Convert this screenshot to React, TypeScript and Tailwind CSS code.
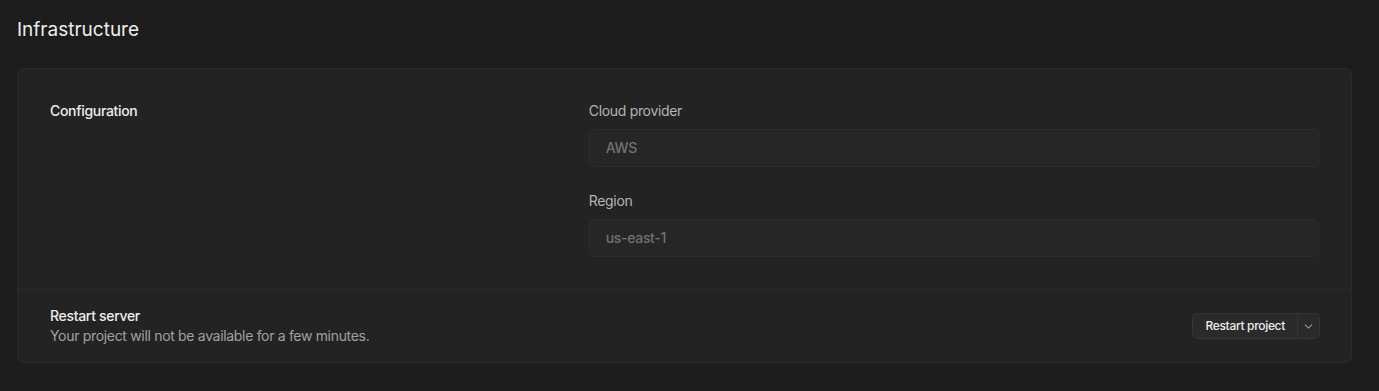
import { ChevronDown } from 'lucide-react';

const font = { fontFamily: 'Inter, "Noto Sans", sans-serif' };

function Field({ label, value }: { label: string; value: string }) {
  return (
    <div className="flex flex-col gap-2">
      <label className="text-sm leading-5 text-[#b4b4b4]">{label}</label>
      <div className="flex h-[38px] items-center rounded-md border border-[#2e2e2e] bg-[#262626] px-4 text-sm font-medium text-[#727272]">
        {value}
      </div>
    </div>
  );
}

export default function App() {
  return (
    <div className="min-h-[391px] bg-[#1c1c1c] pl-[17px] pr-[27px] pt-[18px] pb-7 tracking-[-0.02em] antialiased" style={font}>
      <h1 className="mb-[26px] text-[19px] leading-6 tracking-normal text-[#ededed]">Infrastructure</h1>

      <div className="rounded-md border border-[#2a2a2a] bg-[#232323]">
        <div className="grid grid-cols-12 gap-6 border-b border-[#2a2a2a] px-8 py-8">
          <div className="col-span-5 text-sm font-medium leading-5 text-[#ededed]">Configuration</div>
          <div className="col-span-7 flex flex-col gap-6">
            <Field label="Cloud provider" value="AWS" />
            <Field label="Region" value="us-east-1" />
          </div>
        </div>

        <div className="flex items-center justify-between px-8 py-4">
          <div className="text-sm leading-5">
            <p className="font-medium text-[#ededed]">Restart server</p>
            <p className="text-[#a0a0a0]">Your project will not be available for a few minutes.</p>
          </div>
          <div className="-mr-px flex h-[26px] items-stretch rounded-md border border-[#363636] bg-[#2a2a2a] text-xs font-medium text-[#ededed]">
            <button className="px-3">Restart project</button>
            <button className="flex w-[22px] items-center justify-center border-l border-[#363636] text-[#8f8f8f]">
              <ChevronDown size={13} />
            </button>
          </div>
        </div>
      </div>
    </div>
  );
}
